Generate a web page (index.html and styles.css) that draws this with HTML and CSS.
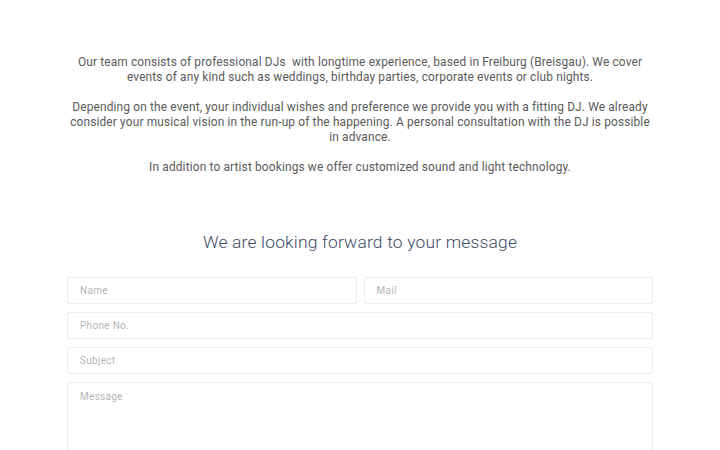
FILE: index.html
```html
<!DOCTYPE html>
<html lang="en">
<head>
    <meta charset="UTF-8">
    <meta name="viewport" content="width=device-width, initial-scale=1.0">
    <title>Contact</title>
    <link rel="stylesheet" href="styles.css">
</head>
<body>
    <div class="container">
        <div class="intro">
            <p>Our team consists of professional DJs&nbsp; with longtime experience, based in Freiburg (Breisgau). We cover events of any kind such as weddings, birthday parties, corporate events or club nights.</p>
            <p>Depending on the event, your individual wishes and preference we provide you with a fitting DJ. We already consider your musical vision in the run-up of the happening. A personal consultation with the DJ is possible in advance.</p>
            <p>In addition to artist bookings we offer customized sound and light technology.</p>
        </div>

        <h2 class="title">We are looking forward to your message</h2>

        <form class="contact-form">
            <div class="row">
                <input type="text" name="name" placeholder="Name">
                <input type="text" name="mail" placeholder="Mail">
            </div>
            <input type="text" name="phone" placeholder="Phone No.">
            <input type="text" name="subject" placeholder="Subject">
            <textarea name="message" placeholder="Message"></textarea>
        </form>
    </div>
</body>
</html>
```

FILE: styles.css
```css
body {
    font-family: Roboto, "Liberation Sans", sans-serif;
    background-color: #fff;
    margin: 0;
    padding: 0;
}

.container {
    width: 586px;
    margin: 0 auto;
    padding-top: 55px;
}

.intro {
    color: #5a5a5a;
    font-size: 11.9px;
    line-height: 15px;
    text-align: center;
    letter-spacing: 0.15px;
}

.intro p {
    margin: 0 0 15px;
}

.title {
    font-weight: 300;
    font-size: 17.4px;
    color: #3d4a66;
    text-align: center;
    margin: 57px 0 25px;
    letter-spacing: 0.2px;
}

.contact-form {
    display: flex;
    flex-direction: column;
    gap: 8px;
}

.row {
    display: flex;
    gap: 7px;
}

input[type="text"],
textarea {
    box-sizing: border-box;
    width: 100%;
    height: 27px;
    padding: 0 12px;
    border: 1px solid #ececec;
    border-radius: 2px;
    font-family: Roboto, sans-serif;
    font-size: 10px;
    color: #555;
    letter-spacing: 0.3px;
}

textarea {
    height: 100px;
    padding-top: 8px;
    resize: none;
}

::placeholder {
    color: #b5b5b5;
}
```
